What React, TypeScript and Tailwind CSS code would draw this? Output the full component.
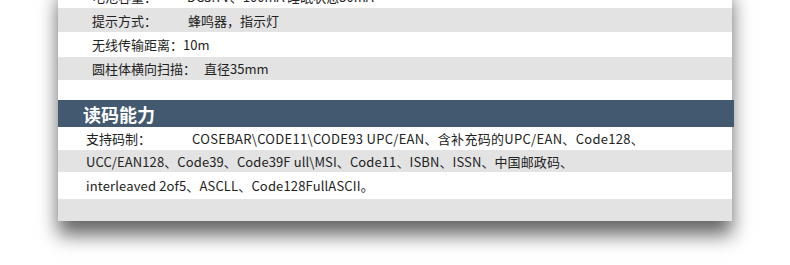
const font = { fontFamily: '"Noto Sans CJK SC", "Noto Sans", sans-serif' };

export default function App() {
  return (
    <div className="w-[790px] h-[265px] overflow-hidden bg-white" style={font}>
      <div className="ml-[58px] mt-[-16px] w-[674px] bg-white text-[13px] leading-none text-[#222] shadow-[0_14px_18px_rgba(0,0,0,0.6)]">
        <div className="flex h-[24px] items-center pl-[34px]">
          <span>电池容量：</span>
          <span className="ml-[30px]">DC3.7V、100mA 睡眠状态50mA</span>
        </div>
        <div className="flex h-[24px] items-center bg-[#e3e3e3] pl-[34px]">
          <span>提示方式：</span>
          <span className="ml-[31px]">蜂鸣器，指示灯</span>
        </div>
        <div className="flex h-[25px] items-center pl-[34px]">
          <span>无线传输距离：10m</span>
        </div>
        <div className="flex h-[23px] items-center bg-[#e3e3e3] pl-[34px]">
          <span>圆柱体横向扫描：</span>
          <span className="ml-[8px]">直径35mm</span>
        </div>
        <div className="h-[20px]" />
        <div className="flex h-[27px] w-[676px] items-center bg-[#425970] pl-[25px]">
          <span className="text-[18px] font-bold text-white">读码能力</span>
        </div>
        <div className="flex h-[23px] items-center pl-[28px]">
          <span>支持码制：</span>
          <span className="ml-[41px] tracking-[0.3px]">COSEBAR\CODE11\CODE93 UPC/EAN、含补充码的UPC/EAN、Code128、</span>
        </div>
        <div className="flex h-[22px] items-center bg-[#e3e3e3] pl-[28px] tracking-[0.1px]">
          <span>UCC/EAN128、Code39、Code39F ull\MSI、Code11、ISBN、ISSN、中国邮政码、</span>
        </div>
        <div className="flex h-[27px] items-center pl-[28px] tracking-[0.15px]">
          <span>interleaved 2of5、ASCLL、Code128FullASCII。</span>
        </div>
        <div className="h-[22px] bg-[#e3e3e3]" />
      </div>
    </div>
  );
}
